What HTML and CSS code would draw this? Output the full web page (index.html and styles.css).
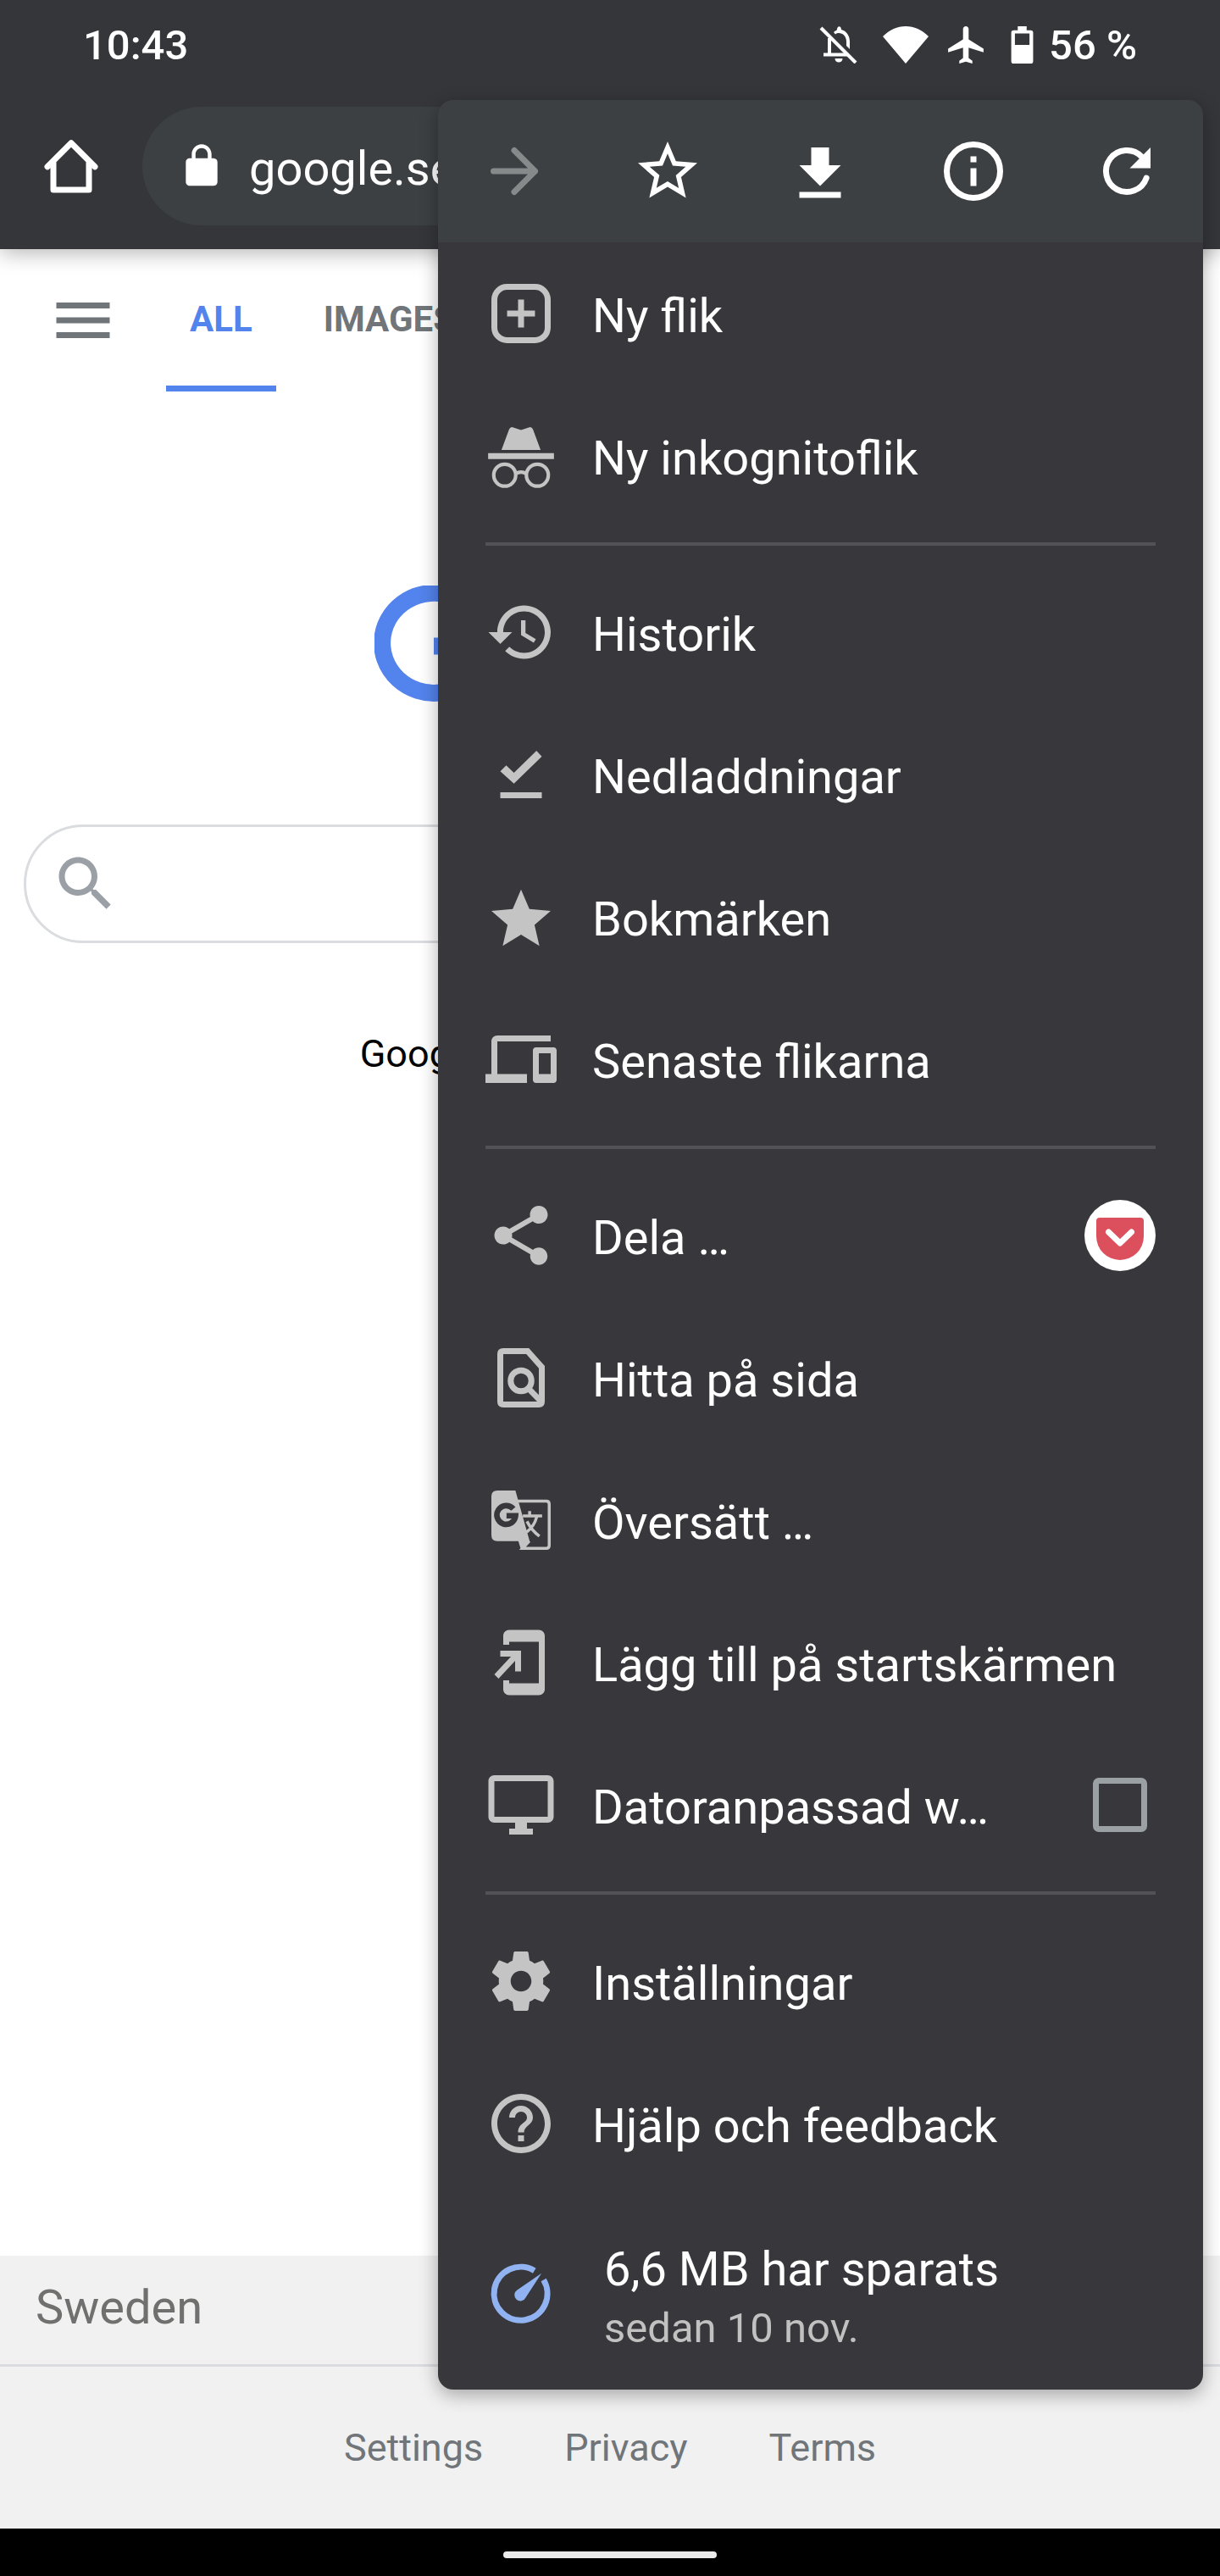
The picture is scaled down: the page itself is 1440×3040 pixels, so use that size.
FILE: index.html
```html
<!DOCTYPE html>
<html lang="sv">
<head>
  <meta charset="UTF-8">
  <meta name="viewport" content="width=device-width, initial-scale=1.0">
  <title>Google</title>
  <link rel="stylesheet" href="styles.css">
</head>
<body>
  <div class="status-bar">
    <span class="clock">10:43</span>
    <div class="status-icons">
      <svg class="status-bell" viewBox="0 0 46 44">
        <path d="M12 14V32M5 33.500H34" fill="none" stroke="#fff" stroke-width="4"/>
        <path d="M17 7c2-2 3.500-2 4-3 0-5 5-5 5 0 6 1.500 10 7 10 14v9l-4-4v-5c0-6-4-10-9-10-2 0-3 .5-4 1.500z" fill="#fff"/>
        <path d="M18.500 38h9c0 6-9 6-9 0z" fill="#fff"/>
        <path d="M2 2L43 43" stroke="#fff" stroke-width="4"/>
      </svg>
      <svg class="status-wifi" viewBox="0 0 54 44"><path d="M27 44L0 12C8 4 17 0 27 0s19 4 27 12z" fill="#fff"/></svg>
      <svg class="status-plane" viewBox="1.500 2 20 20"><path d="M21 16v-2l-8-5V3.500c0-.83-.67-1.500-1.500-1.500S10 2.670 10 3.500V9l-8 5v2l8-2.500V19l-2 1.500V22l3.500-1 3.500 1v-1.500L13 19v-5.500l8 2.500z" fill="#fff"/></svg>
      <svg class="status-battery" viewBox="0 0 28 46"><path d="M3 5H8V0h11v5h5q3 0 3 3v35q0 3-3 3H3q-3 0-3-3V8q0-3 3-3zM4.500 9v14h18V9z" fill="#fff" fill-rule="evenodd"/></svg>
    </div>
    <span class="battery-level">56 %</span>
  </div>

  <header class="toolbar">
    <button class="home-button" aria-label="Startsida">
      <svg class="icon" viewBox="0 0 24 24"><path d="M4 12.200L12 4.200l8 8M6 10.800V20h12V10.800" fill="none" stroke="#fff" stroke-width="2" stroke-linecap="round" stroke-linejoin="round"/></svg>
    </button>
    <div class="url-bar">
      <svg class="lock" viewBox="0 0 24 24"><path d="M18 8h-1V6c0-2.760-2.240-5-5-5S7 3.240 7 6v2H6c-1.100 0-2 .9-2 2v10c0 1.100.9 2 2 2h12c1.100 0 2-.9 2-2V10c0-1.100-.9-2-2-2zM8.900 8V6c0-1.710 1.390-3.100 3.100-3.100s3.100 1.390 3.100 3.100v2z" fill="#fff"/></svg>
      <span class="url">google.se</span>
    </div>
  </header>

  <main class="page">
    <nav class="tabs">
      <button class="menu-button" aria-label="Menu">
        <svg class="icon" viewBox="0 0 24 24"><path d="M3 18h18v-2H3v2zm0-5h18v-2H3v2zm0-7v2h18V6H3z" fill="#70757a"/></svg>
      </button>
      <a class="tab active" href="#">ALL</a>
      <a class="tab" href="#">IMAGES</a>
    </nav>

    <svg class="logo" viewBox="0 0 556 138">
      <path d="M116 29A61 59 0 1 0 131 71.500H70" fill="none" stroke="#5383ec" stroke-width="20"/>
    </svg>

    <form class="search">
      <svg class="icon" viewBox="0 0 24 24"><path d="M15.500 14h-.79l-.28-.27C15.410 12.590 16 11.110 16 9.500 16 5.910 13.090 3 9.500 3S3 5.910 3 9.500 5.910 16 9.500 16c1.610 0 3.090-.59 4.230-1.570l.27.28v.79l5 4.990L20.490 19l-4.990-5zm-6 0C7.010 14 5 11.990 5 9.500S7.010 5 9.500 5 14 7.010 14 9.500 11.990 14 9.500 14z" fill="#9aa0a6"/></svg>
      <input class="search-input" type="text" aria-label="Search">
    </form>

    <p class="language">Google offered in: <a href="#">svenska</a></p>
  </main>

  <footer class="footer">
    <div class="country">Sweden</div>
    <div class="footer-links">
      <a href="#">Settings</a>
      <a href="#">Privacy</a>
      <a href="#">Terms</a>
    </div>
  </footer>

  <div class="nav-bar"><div class="handle"></div></div>

  <!-- Overflow menu -->
  <div class="menu">
    <div class="menu-header">
      <button class="menu-action" aria-label="Framåt" disabled>
        <svg class="icon" viewBox="0 0 24 24"><path d="M5 12h14M12 5l7 7-7 7" fill="none" stroke="#868a8b" stroke-width="2" stroke-linecap="round" stroke-linejoin="round"/></svg>
      </button>
      <button class="menu-action" aria-label="Bokmärk">
        <svg class="icon" viewBox="0 0 24 24"><path d="M22 9.240l-7.190-.62L12 2 9.190 8.630 2 9.240l5.460 4.730L5.820 21 12 17.270 18.180 21l-1.630-7.030L22 9.240zM12 15.400l-3.760 2.270 1-4.280-3.320-2.880 4.380-.38L12 6.100l1.710 4.040 4.380.38-3.320 2.880 1 4.280L12 15.400z" fill="#fff"/></svg>
      </button>
      <button class="menu-action" aria-label="Ladda ned">
        <svg class="icon" viewBox="0 -1 24 24"><path d="M19 9h-4V3H9v6H5l7 7 7-7zM5 18v2h14v-2H5z" fill="#fff"/></svg>
      </button>
      <button class="menu-action" aria-label="Sidinformation">
        <svg class="icon" viewBox="0 0 24 24"><circle cx="12" cy="12" r="9" fill="none" stroke="#fff" stroke-width="2"/><path d="M11 7h2v2h-2zM11 11h2v6h-2z" fill="#fff"/></svg>
      </button>
      <button class="menu-action" aria-label="Uppdatera">
        <svg class="icon" viewBox="0 0 24 24"><path d="M18.600 14.300A7 7 0 1 1 17 7.100" fill="none" stroke="#fff" stroke-width="2" stroke-linecap="round"/><path d="M20 4v7h-7z" fill="#fff"/></svg>
      </button>
    </div>

    <button class="menu-item">
      <svg class="icon" viewBox="0 0 24 24"><rect x="3" y="3" width="18" height="18" rx="4.300" fill="none" stroke="#c4c4c4" stroke-width="2"/><path d="M12 7.300v9.400M7.300 12h9.400" stroke="#c4c4c4" stroke-width="2"/></svg>
      <span class="label">Ny flik</span>
    </button>
    <button class="menu-item">
      <svg class="icon" viewBox="0 0 24 24">
        <path d="M5.400 10L8 3q.5-1 1.400-.6L12 3.300l2.600-.9q.9-.4 1.400.6L18.600 10zM.9 11.100h22.200v2H.9z" fill="#c4c4c4"/>
        <path d="M10.200 18q1.800-1.100 3.600 0" fill="none" stroke="#c4c4c4" stroke-width="1.200"/>
        <circle cx="6.500" cy="18.500" r="3.700" fill="none" stroke="#c4c4c4" stroke-width="1.200"/>
        <circle cx="17.500" cy="18.500" r="3.700" fill="none" stroke="#c4c4c4" stroke-width="1.200"/>
      </svg>
      <span class="label">Ny inkognitoflik</span>
    </button>

    <hr class="divider">

    <button class="menu-item">
      <svg class="icon" viewBox="0 0 24 24"><path d="M13 3c-4.970 0-9 4.030-9 9H1l3.890 3.890.07.14L9 12H6c0-3.870 3.130-7 7-7s7 3.130 7 7-3.130 7-7 7c-1.930 0-3.680-.79-4.940-2.060l-1.420 1.420C8.270 19.990 10.510 21 13 21c4.970 0 9-4.030 9-9s-4.030-9-9-9zm-1 5v5l4.280 2.540.72-1.210-3.500-2.080V8H12z" fill="#c4c4c4"/></svg>
      <span class="label">Historik</span>
    </button>
    <button class="menu-item">
      <svg class="icon" viewBox="0 0 24 24"><path d="M5 10.900L7 8.900l2.600 2.500L17.200 4 19 5.900l-9.400 9.200zM5 18h14v2H5z" fill="#c4c4c4"/></svg>
      <span class="label">Nedladdningar</span>
    </button>
    <button class="menu-item">
      <svg class="icon" viewBox="0 -.75 24 24"><path d="M12 17.270L18.180 21l-1.640-7.030L22 9.240l-7.190-.61L12 2 9.190 8.630 2 9.240l5.460 4.730L5.820 21z" fill="#c4c4c4"/></svg>
      <span class="label">Bokmärken</span>
    </button>
    <button class="menu-item">
      <svg class="icon" viewBox="0 0 24 24"><path d="M4 6h18V4H4c-1.100 0-2 .9-2 2v11H0v3h14v-3H4V6zm19 2h-6c-.55 0-1 .45-1 1v10c0 .55.45 1 1 1h6c.55 0 1-.45 1-1V9c0-.55-.45-1-1-1zm-1 9h-4v-7h4v7z" fill="#c4c4c4"/></svg>
      <span class="label">Senaste flikarna</span>
    </button>

    <hr class="divider">

    <div class="menu-item">
      <svg class="icon" viewBox="0 0 24 24"><path d="M18 16.080c-.76 0-1.440.3-1.960.77L8.910 12.700c.05-.23.09-.46.09-.7s-.04-.47-.09-.7l7.050-4.110c.54.5 1.250.81 2.040.81 1.660 0 3-1.340 3-3s-1.340-3-3-3-3 1.340-3 3c0 .24.04.47.09.7L8.040 9.810C7.500 9.310 6.790 9 6 9c-1.660 0-3 1.340-3 3s1.340 3 3 3c.79 0 1.500-.31 2.040-.81l7.120 4.160c-.05.21-.08.43-.08.65 0 1.610 1.310 2.920 2.920 2.920s2.920-1.310 2.920-2.920-1.310-2.920-2.920-2.920z" fill="#c4c4c4"/></svg>
      <button class="label">Dela …</button>
      <button class="pocket" aria-label="Pocket">
        <svg class="icon" viewBox="0 0 84 84">
          <circle cx="42" cy="42" r="42" fill="#fff"/>
          <path d="M18 21H66q4 0 4 4V43A28 28 0 0 1 14 43V25q0-4 4-4z" fill="#dc4f5c"/>
          <path d="M28.500 38L42 51 55.500 38" fill="none" stroke="#fff" stroke-width="7" stroke-linecap="round" stroke-linejoin="round"/>
        </svg>
      </button>
    </div>
    <button class="menu-item">
      <svg class="icon" viewBox="0 0 24 24">
        <path d="M6 3h8.200L19 8.400V20q0 1-1 1H6q-1 0-1-1V4q0-1 1-1z" fill="none" stroke="#c4c4c4" stroke-width="2"/>
        <circle cx="12" cy="13" r="3.500" fill="none" stroke="#c4c4c4" stroke-width="2"/>
        <path d="M14.300 15.400l4.400 4.500" stroke="#c4c4c4" stroke-width="2"/>
      </svg>
      <span class="label">Hitta på sida</span>
    </button>
    <button class="menu-item">
      <svg class="icon" viewBox="0 0 24 24">
        <path d="M10.700 5.600H20.500q1 0 1 1V20.500q0 1-1 1H12.500L14.800 19" fill="none" stroke="#c4c4c4"/>
        <path d="M4 2h6.100L14.900 19.100 12 22l-.9-2.900H4q-2 0-2-2V4q0-2 2-2z" fill="#c4c4c4"/>
        <path d="M9.400 8.200A3.150 3.150 0 1 0 10.150 10.500H7.100" fill="none" stroke="#38373b" stroke-width="1.900"/>
        <path d="M12.600 10.600h6.500M14.900 8.900v1.700M17.300 10.800q-.8 3.200-3.400 5.200M14 12.400q1.500 3 4.200 5" fill="none" stroke="#c4c4c4"/>
      </svg>
      <span class="label">Översätt …</span>
    </button>
    <button class="menu-item">
      <svg class="icon" viewBox="0 0 24 24"><path d="M18 1H8c-1.100 0-2 .9-2 2v3h2V5h10v14H8v-1H6v3c0 1.100.9 2 2 2h10c1.100 0 2-.9 2-2V3c0-1.100-.9-2-2-2zM10 15h2V8H5v2h3.590L3 15.990 4.410 17.400 10 11.410V15z" fill="#c4c4c4"/></svg>
      <span class="label">Lägg till på startskärmen</span>
    </button>
    <label class="menu-item">
      <svg class="icon" viewBox="0 0 24 24"><path d="M21 2H3c-1.100 0-2 .9-2 2v12c0 1.100.9 2 2 2h7v2H8v2h8v-2h-2v-2h7c1.100 0 2-.9 2-2V4c0-1.100-.9-2-2-2zm0 14H3V4h18v12z" fill="#c4c4c4"/></svg>
      <span class="label">Datoranpassad w…</span>
      <input class="checkbox" type="checkbox">
    </label>

    <hr class="divider">

    <button class="menu-item">
      <svg class="icon" viewBox="0 0 24 24"><path d="M19.430 12.980c.04-.32.07-.64.07-.98s-.03-.66-.07-.98l2.110-1.650c.19-.15.24-.42.12-.64l-2-3.460c-.12-.22-.39-.3-.61-.22l-2.490 1c-.52-.4-1.080-.73-1.690-.98l-.38-2.650C14.460 2.180 14.250 2 14 2h-4c-.25 0-.46.18-.49.42l-.38 2.650c-.61.25-1.170.59-1.690.98l-2.490-1c-.23-.09-.49 0-.61.22l-2 3.460c-.13.22-.07.49.12.64l2.110 1.650c-.04.32-.07.65-.07.98s.03.66.07.98l-2.110 1.650c-.19.15-.24.42-.12.64l2 3.460c.12.22.39.3.61.22l2.490-1c.52.4 1.080.73 1.690.98l.38 2.650c.03.24.24.42.49.42h4c.25 0 .46-.18.49-.42l.38-2.650c.61-.25 1.170-.59 1.690-.98l2.490 1c.23.09.49 0 .61-.22l2-3.460c.12-.22.07-.49-.12-.64l-2.110-1.650zM12 15.500c-1.930 0-3.500-1.570-3.500-3.500s1.570-3.500 3.500-3.500 3.500 1.570 3.500 3.500-1.570 3.500-3.500 3.500z" fill="#c4c4c4"/></svg>
      <span class="label">Inställningar</span>
    </button>
    <button class="menu-item">
      <svg class="icon" viewBox="0 0 24 24"><path d="M11 18h2v-2h-2v2zm1-16C6.480 2 2 6.480 2 12s4.480 10 10 10 10-4.480 10-10S17.520 2 12 2zm0 18c-4.410 0-8-3.590-8-8s3.590-8 8-8 8 3.590 8 8-3.590 8-8 8zm0-14c-2.210 0-4 1.790-4 4h2c0-1.100.9-2 2-2s2 .9 2 2c0 2-3 1.750-3 5h2c0-2.250 3-2.500 3-5 0-2.210-1.790-4-4-4z" fill="#c4c4c4"/></svg>
      <span class="label">Hjälp och feedback</span>
    </button>
    <button class="menu-item data-saver">
      <svg class="icon" viewBox="0 0 24 24">
        <path d="M16.500 4.200A9 9 0 1 0 19.600 7.300" fill="none" stroke="#91b3f2" stroke-width="2"/>
        <path d="M18.900 5.100L10.700 10.700A2 2 0 1 0 13.600 13.200z" fill="#91b3f2"/>
      </svg>
      <span class="label">
        <span class="saved">6,6 MB har sparats</span>
        <span class="since">sedan 10 nov.</span>
      </span>
    </button>
  </div>
</body>
</html>
```
FILE: styles.css
```css
* {
  box-sizing: border-box;
}

body {
  margin: 0;
  min-height: 100vh;
  position: relative;
  display: flex;
  flex-direction: column;
  background-color: #fff;
  font-family: Roboto, "Liberation Sans", sans-serif;
  font-size: 56px;
}

button {
  margin: 0;
  padding: 0;
  border: none;
  background: none;
  color: inherit;
  font: inherit;
  text-align: left;
  cursor: pointer;
}

a {
  color: inherit;
  text-decoration: none;
}

.icon {
  display: block;
  flex: none;
  width: 84px;
  height: 84px;
}

/* Status bar */
.status-bar {
  position: relative;
  z-index: 1; /* keeps the toolbar shadow below it */
  display: flex;
  align-items: center;
  height: 98px;
  padding: 8px 98px 0 98px;
  background-color: #35363a;
  color: #fff;
  font-size: 49px;
  font-weight: 500;
}

.status-icons {
  display: flex;
  align-items: center;
  gap: 22px;
  margin-left: auto;
  margin-right: 8px;
}

.status-icons svg {
  height: 44px;
}

.status-bell {
  width: 60px;
}

.status-wifi {
  width: 54px;
}

.status-plane {
  width: 44px;
}

.status-battery {
  width: 46px;
}

/* Toolbar */
.toolbar {
  position: relative;
  display: flex;
  align-items: center;
  height: 196px;
  padding-right: 308px;
  background-color: #35363a;
  box-shadow: 0 4px 24px rgba(0, 0, 0, 0.3);
}

.home-button {
  padding: 0 42px;
}

.url-bar {
  flex: 1;
  display: flex;
  align-items: center;
  gap: 28px;
  height: 140px;
  padding-left: 42px;
  border-radius: 70px;
  background-color: #3c4043;
  color: #fff;
}

.lock {
  width: 56px;
  height: 56px;
}

.url {
  padding-top: 6px;
}

/* Page */
.page {
  flex: 1;
  display: flex;
  flex-direction: column;
}

.tabs {
  display: flex;
  gap: 28px;
  height: 168px;
  padding-left: 56px;
  color: #70757a;
  font-size: 42px;
  font-weight: 700;
}

.menu-button {
  margin-right: 28px;
}

.tab {
  display: flex;
  align-items: center;
  padding: 4px 28px 0;
  border-bottom: 7px solid transparent;
}

.tab.active {
  color: #5383ec;
  border-bottom-color: #5383ec;
}

.logo {
  width: 556px;
  height: 138px;
  margin: 229px auto 144px;
}

.search {
  display: flex;
  align-items: center;
  height: 140px;
  margin: 0 28px;
  padding: 0 28px;
  border: 3px solid #dadce0;
  border-radius: 70px;
}

.search-input {
  flex: 1;
  min-width: 0;
  border: none;
  outline: none;
  background: none;
  font: inherit;
}

.language {
  margin: 104px 0 0;
  color: #000;
  font-size: 45px;
  text-align: center;
}

.language a {
  padding: 0 30px;
  color: #1a0dab;
}

/* Footer */
.footer {
  background-color: #f1f1f1;
}

.country {
  padding: 28px 42px 34px;
  border-bottom: 3px solid #dadce0;
  color: #70706f;
}

.footer-links {
  display: flex;
  align-items: center;
  justify-content: center;
  gap: 96px;
  height: 191px;
  color: #70757a;
  font-size: 45px;
}

.nav-bar {
  display: flex;
  align-items: center;
  justify-content: center;
  height: 56px;
  padding-top: 6px;
  background-color: #000;
}

.handle {
  width: 252px;
  height: 8px;
  border-radius: 4px;
  background-color: #ebebeb;
}

/* Overflow menu */
.menu {
  position: absolute;
  z-index: 2;
  top: 118px;
  right: 20px;
  width: 903px;
  overflow: hidden;
  border-radius: 18px;
  background-color: #38373b;
  box-shadow: 0 6px 22px rgba(0, 0, 0, 0.32);
  color: #fff;
}

.menu-header {
  display: flex;
  height: 168px;
  background-color: #3c4043;
}

.menu-action {
  flex: 1;
  display: flex;
  align-items: center;
  justify-content: center;
}

.menu-item {
  display: flex;
  align-items: center;
  gap: 42px;
  width: 100%;
  height: 168px;
  padding: 0 56px;
}

.label {
  padding-top: 6px;
  white-space: nowrap;
}

.divider {
  height: 4px;
  margin: 18px 56px;
  border: none;
  background-color: #525156;
}

.pocket {
  margin-left: auto;
}

.checkbox {
  appearance: none;
  flex: none;
  width: 64px;
  height: 64px;
  margin: 0 10px 0 auto;
  border: 7px solid #9aa0a3;
  border-radius: 7px;
}

.data-saver {
  height: 230px;
  padding-top: 4px;
}

.data-saver .label {
  display: flex;
  flex-direction: column;
  gap: 8px;
  padding-left: 14px;
}

.since {
  color: #c1c1c1;
  font-size: 49px;
}
```
